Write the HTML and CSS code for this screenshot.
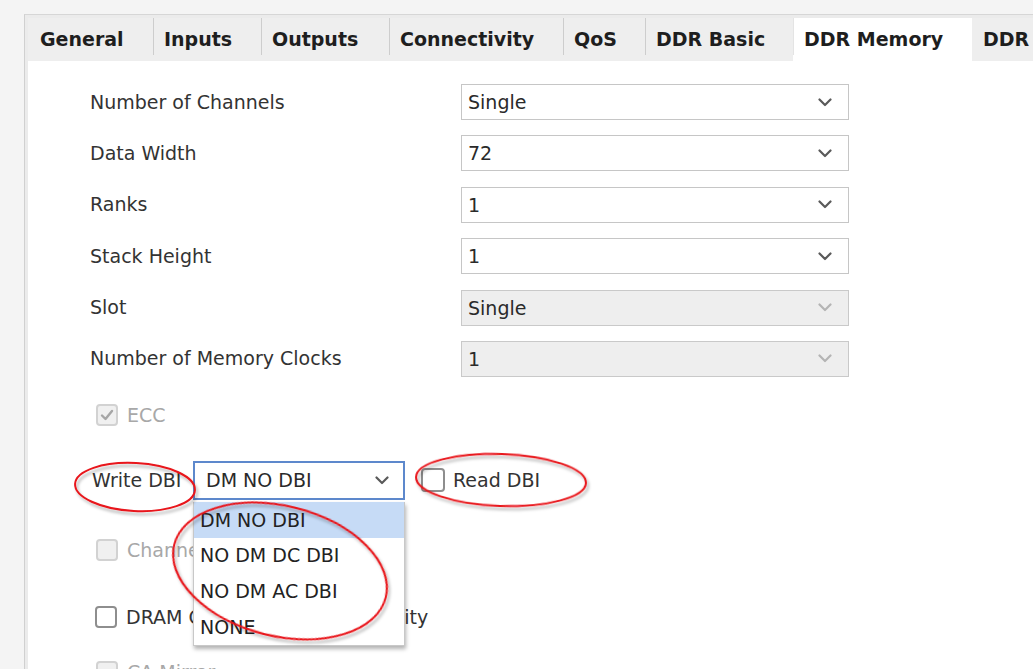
FILE: index.html
```html
<!DOCTYPE html>
<html>
<head>
<meta charset="utf-8">
<link rel="stylesheet" href="styles.css">
</head>
<body>
<div class="frame">
  <div class="tabs">
    <div class="tab t-general">General</div>
    <div class="tab t-inputs">Inputs</div>
    <div class="tab t-outputs">Outputs</div>
    <div class="tab t-conn">Connectivity</div>
    <div class="tab t-qos">QoS</div>
    <div class="tab t-basic">DDR Basic</div>
    <div class="tab t-mem active">DDR Memory</div>
    <div class="tab t-ddr">DDR</div>
  </div>
  <div class="content">
    <div class="grid">
      <div class="label">Number of Channels</div>
      <div class="select"><span>Single</span><svg class="chev" width="14" height="9" viewBox="0 0 14 9"><polyline points="1.5,1.5 7,7 12.5,1.5"/></svg></div>
      <div class="label">Data Width</div>
      <div class="select"><span>72</span><svg class="chev" width="14" height="9" viewBox="0 0 14 9"><polyline points="1.5,1.5 7,7 12.5,1.5"/></svg></div>
      <div class="label">Ranks</div>
      <div class="select"><span>1</span><svg class="chev" width="14" height="9" viewBox="0 0 14 9"><polyline points="1.5,1.5 7,7 12.5,1.5"/></svg></div>
      <div class="label">Stack Height</div>
      <div class="select"><span>1</span><svg class="chev" width="14" height="9" viewBox="0 0 14 9"><polyline points="1.5,1.5 7,7 12.5,1.5"/></svg></div>
      <div class="label">Slot</div>
      <div class="select disabled"><span>Single</span><svg class="chev" width="14" height="9" viewBox="0 0 14 9"><polyline points="1.5,1.5 7,7 12.5,1.5"/></svg></div>
      <div class="label">Number of Memory Clocks</div>
      <div class="select disabled"><span>1</span><svg class="chev" width="14" height="9" viewBox="0 0 14 9"><polyline points="1.5,1.5 7,7 12.5,1.5"/></svg></div>
    </div>

    <div class="check-row ecc disabled">
      <span class="box checked"><svg width="16" height="16" viewBox="0 0 16 16"><polyline points="3,8.5 6.5,12 13,4"/></svg></span>
      <span class="ctext">ECC</span>
    </div>

    <div class="dbi-row">
      <div class="dbi-label">Write DBI</div>
      <div class="dbi-select-wrap">
        <div class="select focused"><span>DM NO DBI</span><svg class="chev" width="14" height="9" viewBox="0 0 14 9"><polyline points="1.5,1.5 7,7 12.5,1.5"/></svg></div>
        <ul class="menu">
          <li class="sel">DM NO DBI</li>
          <li>NO DM DC DBI</li>
          <li>NO DM AC DBI</li>
          <li>NONE</li>
        </ul>
      </div>
      <div class="read-dbi">
        <span class="box"></span>
        <span class="ctext">Read DBI</span>
      </div>
    </div>

    <div class="check-row chan disabled">
      <span class="box"></span>
      <span class="ctext">Channel Interleaving</span>
    </div>

    <div class="check-row dram">
      <span class="box"></span>
      <span class="ctext">DRAM Command/Address Parity</span>
    </div>

    <div class="check-row ca disabled">
      <span class="box"></span>
      <span class="ctext">CA Mirror</span>
    </div>
  </div>
</div>

<svg class="annot" width="1033" height="669" viewBox="0 0 1033 669">
  <defs>
    <filter id="sh" x="-20%" y="-20%" width="140%" height="140%">
      <feDropShadow dx="2" dy="3" stdDeviation="1.8" flood-color="#000" flood-opacity="0.3"/>
    </filter>
  </defs>
  <g filter="url(#sh)" fill="none" stroke="#e8141a" stroke-width="2">
    <ellipse cx="135" cy="487" rx="60" ry="24" transform="rotate(3 135 487)"/>
    <ellipse cx="501" cy="480" rx="85" ry="26" transform="rotate(2 501 480)"/>
    <ellipse cx="280" cy="571" rx="109" ry="65" transform="rotate(14 280 571)"/>
  </g>
</svg>
</body>
</html>
```

FILE: styles.css
```css
html, body {
  margin: 0;
  padding: 0;
}
body {
  width: 1033px;
  height: 669px;
  overflow: hidden;
  background: #f4f4f4;
  font-family: "DejaVu Sans", sans-serif;
  font-size: 19px;
  color: #333;
  position: relative;
}
.frame {
  margin: 14px 0 0 24px;
  border-top: 1px solid #d6d6d6;
  border-left: 1px solid #d0d0d0;
  background: #ebebeb;
  padding: 3px 0 0 3px;
  height: 660px;
  box-sizing: border-box;
}
.tabs {
  display: flex;
  height: 43px;
  background: #eeeeee;
}
.tab {
  position: relative;
  box-sizing: border-box;
  padding: 10px 0 0 11px;
  font-weight: bold;
  font-size: 19px;
  color: #1e1e1e;
  white-space: nowrap;
}
.tab::before {
  content: "";
  position: absolute;
  left: 0;
  top: 0;
  height: 37px;
  width: 1px;
  background: #cdcdcd;
}
.t-general { width: 125px; padding-left: 12px; }
.t-general::before { display: none; }
.t-inputs { width: 108px; }
.t-outputs { width: 128px; }
.t-conn { width: 174px; }
.t-qos { width: 82px; }
.t-basic { width: 148px; }
.t-mem { width: 179px; }
.t-mem::before { background: #e4e4e4; }
.t-ddr { flex: 1; }
.t-ddr::before { display: none; }
.tab.active {
  background: #ffffff;
}
.content {
  background: #ffffff;
  height: 620px;
  padding: 23px 0 0 62px;
  box-sizing: border-box;
}
.grid {
  display: grid;
  grid-template-columns: 371px 388px;
  grid-auto-rows: 36px;
  row-gap: 15.4px;
}
.label {
  align-self: center;
  color: #333;
  margin-top: -1px;
}
.select {
  box-sizing: border-box;
  height: 36px;
  border: 1px solid #c6c6c6;
  background: #fff;
  display: flex;
  align-items: center;
  justify-content: space-between;
  padding: 0 16px 0 6px;
  color: #2a2a2a;
}
.chev polyline {
  fill: none;
  stroke: #5a5a5a;
  stroke-width: 2.2;
  stroke-linecap: round;
  stroke-linejoin: round;
}
.select.disabled {
  background: #eeeeee;
  border-color: #c9c9c9;
}
.select.disabled .chev polyline {
  stroke: #b4b4b4;
}
.check-row {
  display: flex;
  align-items: center;
  padding-left: 6px;
  height: 23px;
}
.box {
  box-sizing: border-box;
  width: 22px;
  height: 22px;
  border: 2px solid #8e8e8e;
  border-radius: 4px;
  background: #fff;
  display: flex;
  align-items: center;
  justify-content: center;
  flex: none;
}
.ctext {
  margin-left: 9px;
  color: #333;
}
.check-row.disabled .box {
  border-color: #d2d2d2;
  background: #f0f0f0;
}
.check-row.disabled .ctext {
  color: #a8a8a8;
}
.box svg polyline {
  fill: none;
  stroke: #a6a6a6;
  stroke-width: 2.4;
  stroke-linecap: round;
  stroke-linejoin: round;
}
.ecc { margin-top: 27px; }
.dbi-row {
  margin-top: 34px;
  display: flex;
  align-items: center;
  height: 39px;
}
.dbi-label {
  width: 103px;
  padding-left: 2px;
  box-sizing: border-box;
}
.dbi-select-wrap {
  position: relative;
  width: 212px;
}
.select.focused {
  height: 39px;
  border: 2px solid #5d88cc;
  padding: 0 14px 0 11px;
}
.menu {
  position: absolute;
  left: 0;
  top: 41px;
  width: 212px;
  box-sizing: border-box;
  margin: 0;
  padding: 0;
  list-style: none;
  background: #fff;
  border: 1px solid #c8c8c8;
  border-top: 0;
  box-shadow: 1px 3px 4px rgba(0, 0, 0, 0.3);
  z-index: 2;
}
.menu li {
  height: 35.7px;
  display: flex;
  align-items: center;
  padding-left: 6px;
  color: #222;
}
.menu li.sel {
  background: #c6dbf6;
}
.read-dbi {
  display: flex;
  align-items: center;
  margin-left: 16px;
}
.read-dbi .box {
  width: 24px;
  height: 24px;
}
.read-dbi .ctext {
  margin-left: 8px;
}
.chan { margin-top: 39px; }
.dram { margin-top: 44px; padding-left: 5px; }
.ca { margin-top: 32px; }
.annot {
  position: absolute;
  left: 0;
  top: 0;
  pointer-events: none;
  z-index: 5;
}
```
